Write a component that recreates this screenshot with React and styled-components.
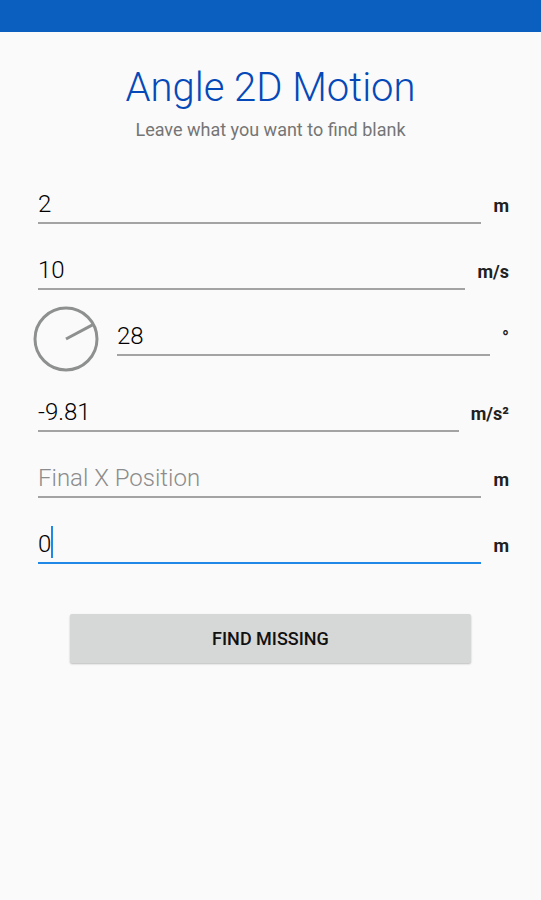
import React, { useState } from "react";
import styled, { createGlobalStyle } from "styled-components";


const FIELDS = [
  { id: 'initialY', name: 'Initial Y Position', unit: 'm' },
  { id: 'velocity', name: 'Initial Velocity', unit: 'm/s' },
  { id: 'angle', name: 'Angle', unit: '°', dial: true },
  { id: 'acceleration', name: 'Acceleration', unit: 'm/s²' },
  { id: 'finalX', name: 'Final X Position', unit: 'm' },
  { id: 'finalY', name: 'Final Y Position', unit: 'm' },
];

const AngleDial = ({ angle }) => {
  const rad = (Number(angle) || 0) * Math.PI / 180;
  return (
    <Dial viewBox="0 0 66 66" aria-hidden="true">
      <circle cx="33" cy="33" r="31" />
      <line x1="33" y1="33" x2={33 + 30 * Math.cos(rad)} y2={33 - 30 * Math.sin(rad)} />
    </Dial>
  );
};

const App = () => {
  const [values, setValues] = useState({
    initialY: '2',
    velocity: '10',
    angle: '28',
    acceleration: '-9.81',
    finalX: '',
    finalY: '0',
  });
  const [active, setActive] = useState('finalY');

  const onChange = (e) => {
    setValues({ ...values, [e.target.id]: e.target.value });
  };

  return (
    <>
      <Global />
      <StatusBar />
      <Page>
        <Title>Angle 2D Motion</Title>
        <Subtitle>Leave what you want to find blank</Subtitle>
        <Form onSubmit={e=>e.preventDefault()}>
          {FIELDS.map(({ id, name, unit, dial }) => (
            <Row key={id} $dial={dial}>
              {dial && <AngleDial angle={values[id]} />}
              <Entry $dial={dial}>
                <Field $active={active === id}>
                  <Input
                    id={id}
                    aria-label={name}
                    placeholder={name}
                    value={values[id]}
                    onChange={onChange}
                    onFocus={()=>setActive(id)}
                    $active={active === id}
                    autoComplete="off"
                  />
                  {active === id && <Caret />}
                </Field>
                <Unit htmlFor={id}>{unit}</Unit>
              </Entry>
            </Row>
          ))}
          <Submit type="submit">FIND MISSING</Submit>
        </Form>
      </Page>
    </>
  );
};

const Global = createGlobalStyle`
  * {
    box-sizing: border-box;
  }
  body {
    margin: 0;
    background: #fafafa;
    font-family: Roboto, sans-serif;
  }
`;

const StatusBar = styled.div`
  height: 32px;
  background: #0b5fbf;
`;

const Page = styled.main`
  padding: 32px;
`;

const Title = styled.h1`
  margin: 0;
  color: #0549b8;
  font-size: 40px;
  font-weight: 300;
  line-height: 48px;
  text-align: center;
`;

const Subtitle = styled.p`
  margin: 6px 0 0;
  color: #757575;
  font-size: 18px;
  line-height: 24px;
  text-align: center;
`;

const Form = styled.form`
  display: flex;
  flex-direction: column;
  padding-top: 27px;
`;

const Row = styled.div`
  display: flex;
  align-items: flex-start;
  gap: 18px;
  padding: ${props => props.$dial ? '5px 0 5px 1px' : '17px 0 11px 6px'};
`;

const Dial = styled.svg`
  flex: none;
  width: 66px;
  height: 66px;
  fill: none;
  stroke: #8e9090;
  stroke-width: 3;
`;

const Entry = styled.div`
  flex: 1;
  min-width: 0;
  display: flex;
  align-items: center;
  gap: 12px;
  padding-top: ${props => props.$dial ? '12px' : '0'};
`;

const Field = styled.div`
  flex: 1;
  min-width: 0;
  display: flex;
  align-items: center;
  height: 38px;
  padding-bottom: 4px;
  border-bottom: 2px solid ${props => props.$active ? '#2089e8' : '#a3a3a3'};
`;

const Input = styled.input`
  width: ${props => props.$active ? 'auto' : '100%'};
  min-width: 0;
  height: 32px;
  padding: 3px 0 0;
  border: 0;
  outline: 0;
  background: none;
  color: #000;
  caret-color: transparent;
  font-family: inherit;
  font-size: 24px;
  font-weight: 300;
  field-sizing: ${props => props.$active ? 'content' : 'fixed'};
  &::placeholder {
    color: #8c8c8c;
    opacity: 1;
  }
`;

const Caret = styled.span`
  flex: none;
  width: 2px;
  height: 32px;
  background: #2089e8;
`;

const Unit = styled.label`
  padding-top: 2px;
  color: #212121;
  font-size: 18px;
  font-weight: 700;
  line-height: 24px;
`;

const Submit = styled.button`
  height: 49px;
  margin: 39px 38px 0;
  border: 0;
  border-radius: 2px;
  background: #d6d7d7;
  box-shadow: 0 1px 2px rgba(0, 0, 0, .25);
  color: #111;
  font-family: inherit;
  font-size: 18px;
  font-weight: 500;
  cursor: pointer;
`;

export default App;
